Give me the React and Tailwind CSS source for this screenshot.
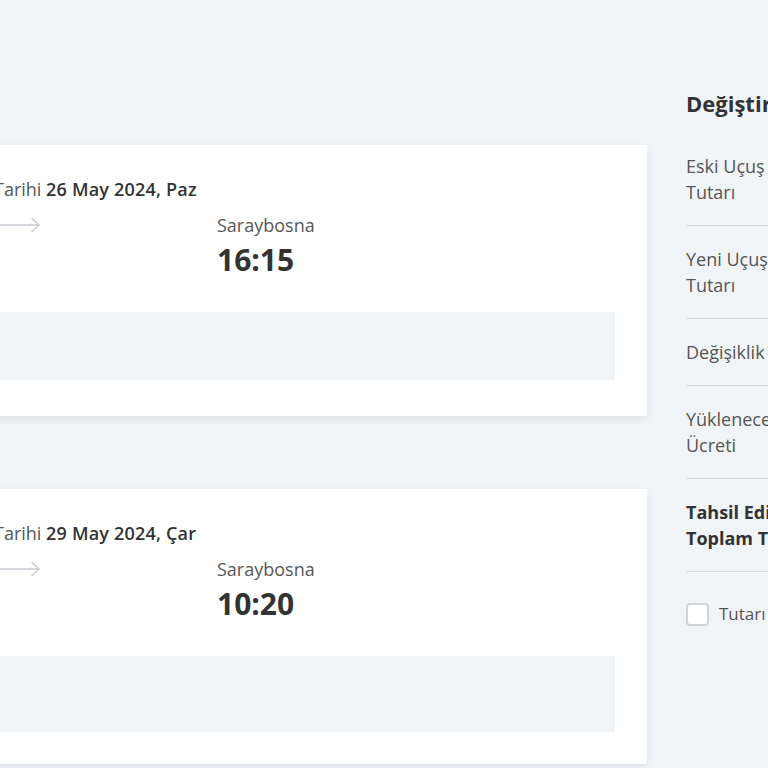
import React from "react";

const font = { fontFamily: '"Open Sans", "Liberation Sans", sans-serif' };

const Arrow = () => (
  <svg width="44" height="16" viewBox="0 0 44 16" fill="none" stroke="#c5cad1" strokeWidth="1.5" strokeLinecap="round" strokeLinejoin="round">
    <path d="M0 8 H42" />
    <path d="M35 1.5 L42 8 L35 14.5" />
  </svg>
);

const FlightCard = ({ date, time, boxHeight, bottomPad }) => (
  <div className={`bg-white shadow-[0_3px_8px_rgba(30,40,60,0.09)] pt-8 px-8 ${bottomPad}`}>
    <div className="text-[18px] leading-6 text-[#555] -ml-[3px] whitespace-nowrap">
      Tarihi <span className="font-semibold text-[#333] tracking-[0.2px]">{date}</span>
    </div>
    <div className="grid grid-cols-[220px_1fr] mt-3">
      <div className="h-6 flex items-center">
        <Arrow />
      </div>
      <div>
        <div className="text-[18px] leading-6 text-[#555]">Saraybosna</div>
        <div className="text-[30px] leading-[36px] font-bold text-[#333] mt-[5px]">{time}</div>
      </div>
    </div>
    <div className={`bg-[#f1f4f7] mt-[34px] ${boxHeight}`} />
  </div>
);

const rows = [
  { label: ["Eski Uçuş", "Tutarı"] },
  { label: ["Yeni Uçuş", "Tutarı"] },
  { label: ["Değişiklik"] },
  { label: ["Yüklenecek Bagaj", "Ücreti"] },
  { label: ["Tahsil Edilecek", "Toplam Tutar"], bold: true },
];

export default function App() {
  return (
    <div className="w-[768px] h-[768px] overflow-hidden bg-[#f1f4f7]" style={font}>
      <div className="flex pt-[88px] -ml-[35px] w-[1200px]">
        {/* Flights */}
        <div className="w-[682px] shrink-0 mt-[57px]">
          <FlightCard date="26 May 2024, Paz" time="16:15" boxHeight="h-[68px]" bottomPad="pb-9" />
          <div className="mt-[73px]">
            <FlightCard date="29 May 2024, Çar" time="10:20" boxHeight="h-[76px]" bottomPad="pb-8" />
          </div>
        </div>

        {/* Summary */}
        <div className="w-[320px] shrink-0 ml-[39px]">
          <h2 className="text-[22px] leading-[30px] font-bold text-[#333] mb-[15px] whitespace-nowrap">
            Değiştirme Özeti
          </h2>
          {rows.map((row, i) => (
            <div key={i} className="flex justify-between py-5 border-b border-[#d9dde2]">
              <div className={`text-[18px] leading-[26px] ${row.bold ? "font-bold text-[#333]" : "text-[#555]"}`}>
                {row.label.map((l, j) => (
                  <div key={j} className="whitespace-nowrap">{l}</div>
                ))}
              </div>
              <div className={`text-[18px] leading-[26px] ${row.bold ? "font-bold text-[#333]" : "text-[#555]"}`}>0,00 TL</div>
            </div>
          ))}
          <label className="flex items-center gap-[10px] pt-[30px]">
            <span className="w-[23px] h-[23px] border-2 border-[#d0d4d9] rounded-[4px] bg-white shrink-0" />
            <span className="text-[17px] leading-6 text-[#555] whitespace-nowrap">Tutarı onaylıyorum</span>
          </label>
        </div>
      </div>
    </div>
  );
}
